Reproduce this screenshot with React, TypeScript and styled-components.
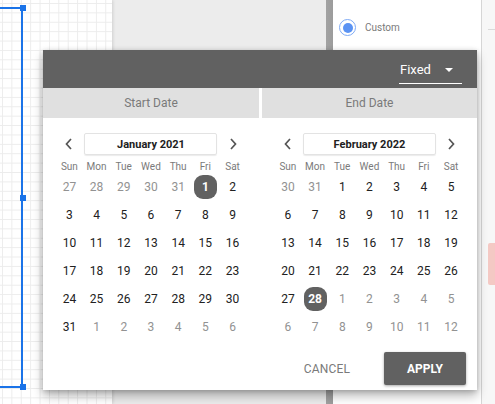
import React from "react";
import styled, { createGlobalStyle } from "styled-components";

const GlobalStyle = createGlobalStyle`
  html, body {
    margin: 0;
    padding: 0;
    overflow: hidden;
    font-family: Roboto, "Liberation Sans", sans-serif;
  }
`;

const Page = styled.div`
  position: relative;
  width: 495px;
  height: 404px;
  display: flex;
  overflow: hidden;
`;

const Canvas = styled.div`
  position: relative;
  width: 112px;
  background-color: #fff;
  background-image: linear-gradient(#ececec 1px, transparent 1px),
    linear-gradient(90deg, #ececec 1px, transparent 1px);
  background-size: 9.4px 9.4px;
  background-position: 2px 3px;
  box-shadow: 1px 0 3px rgba(0, 0, 0, 0.12);
  z-index: 1;
`;

const SelLine = styled.div<{ $dir: "v" | "h"; $top: number; $left: number; $len: number }>`
  position: absolute;
  background: #1a73e8;
  top: ${(p) => p.$top}px;
  left: ${(p) => p.$left}px;
  width: ${(p) => (p.$dir === "v" ? 2 : p.$len)}px;
  height: ${(p) => (p.$dir === "v" ? p.$len : 2)}px;
`;

const Handle = styled.div<{ $top: number }>`
  position: absolute;
  left: 20px;
  top: ${(p) => p.$top}px;
  width: 6px;
  height: 6px;
  background: #1a73e8;
`;

const Gap = styled.div`
  width: 214px;
  background: #ececec;
`;

const Divider = styled.div`
  width: 7px;
  background: linear-gradient(90deg, #a2a2a2, #9c9c9c);
`;

const SidePanel = styled.div`
  width: 149px;
  background: #fff;
  border-right: 1px solid #d6d6d6;
  padding-top: 19px;
  box-sizing: border-box;
`;

const RadioRow = styled.div`
  display: flex;
  align-items: center;
  gap: 9px;
  padding-left: 6px;
  font-size: 10px;
  color: #7a7a7a;
`;

const Radio = styled.span`
  width: 15px;
  height: 15px;
  border-radius: 50%;
  border: 1.5px solid #7eaaf5;
  display: flex;
  align-items: center;
  justify-content: center;
  &::after {
    content: "";
    width: 10px;
    height: 10px;
    border-radius: 50%;
    background: #5b93f3;
  }
`;

const RightStrip = styled.div`
  flex: 1;
  background: #f7f7f7;
  position: relative;
`;

const StripRule = styled.div<{ $top: number }>`
  margin-top: ${(p) => p.$top}px;
  margin-left: 6px;
  height: 1px;
  background: #dadada;
`;

const PinkTag = styled.div`
  position: absolute;
  top: 243px;
  left: 6px;
  right: 0;
  height: 42px;
  background: #f4c9c4;
  border-radius: 2px 0 0 2px;
`;

const Popup = styled.div`
  position: absolute;
  left: 43px;
  top: 50px;
  width: 434px;
  background: #fff;
  box-shadow: 0 6px 10px rgba(0, 0, 0, 0.28), 0 1px 5px rgba(0, 0, 0, 0.2);
  z-index: 5;
`;

const Header = styled.div`
  height: 38px;
  background: #616161;
  display: flex;
  justify-content: flex-end;
  align-items: flex-end;
  padding: 0 15px 4px 0;
  box-sizing: border-box;
`;

const Dropdown = styled.div`
  width: 63px;
  height: 28px;
  box-sizing: border-box;
  border-bottom: 1px solid #fff;
  display: flex;
  align-items: center;
  justify-content: space-between;
  padding: 0 9px 0 1px;
  color: #fff;
  font-size: 13px;
  &::after {
    content: "";
    border-left: 4px solid transparent;
    border-right: 4px solid transparent;
    border-top: 4px solid #fff;
  }
`;

const Tabs = styled.div`
  display: grid;
  grid-template-columns: 216px 215px;
  column-gap: 3px;
  height: 30px;
`;

const Tab = styled.div`
  background: #e0e0e0;
  color: #7a7a7a;
  font-size: 12px;
  display: flex;
  align-items: center;
  justify-content: center;
`;

const Body = styled.div`
  display: grid;
  grid-template-columns: 216px 215px;
  column-gap: 3px;
`;

const CalWrap = styled.div`
  display: flex;
  justify-content: center;
  padding-top: 15px;
`;

const Cal = styled.div`
  width: 190.4px;
`;

const Nav = styled.div`
  display: grid;
  grid-template-columns: 27.2px 1fr 27.2px;
  height: 22px;
  align-items: center;
`;

const Chevron = styled.svg`
  justify-self: center;
`;

const MonthBox = styled.div`
  justify-self: center;
  width: 133px;
  height: 22px;
  box-sizing: border-box;
  border: 1px solid #e3e3e3;
  box-shadow: 0 1px 1px rgba(0, 0, 0, 0.08);
  border-radius: 2px;
  display: flex;
  align-items: center;
  justify-content: center;
  font-size: 11px;
  font-weight: 700;
  color: #212121;
`;

const Grid = styled.div`
  display: grid;
  grid-template-columns: repeat(7, 27.2px);
  grid-template-rows: 14px;
  grid-auto-rows: 28px;
  margin-top: 4px;
`;

const DayHead = styled.div`
  display: flex;
  align-items: center;
  justify-content: center;
  font-size: 10px;
  color: #7a7a7a;
`;

const Day = styled.div<{ $muted?: boolean; $sel?: boolean }>`
  display: flex;
  align-items: center;
  justify-content: center;
  font-size: 12px;
  color: ${(p) => (p.$sel ? "#fff" : p.$muted ? "#929292" : "#212121")};
  font-weight: ${(p) => (p.$sel ? 700 : 400)};
  span {
    width: 23px;
    height: 24px;
    border-radius: 9px;
    display: flex;
    align-items: center;
    justify-content: center;
    background: ${(p) => (p.$sel ? "#616161" : "transparent")};
  }
`;

const Footer = styled.div`
  display: flex;
  justify-content: flex-end;
  align-items: center;
  padding: 11px 11px 5px 0;
  gap: 18px;
`;

const TextButton = styled.button`
  width: 78px;
  height: 33px;
  border: none;
  background: transparent;
  font-family: inherit;
  font-size: 12px;
  color: #7a7a7a;
  letter-spacing: 0.2px;
  padding: 0;
`;

const Primary = styled.button`
  width: 82px;
  height: 33px;
  border: none;
  border-radius: 2px;
  background: #616161;
  color: #fff;
  font-family: inherit;
  font-weight: 700;
  font-size: 12px;
  box-shadow: 0 1px 3px rgba(0, 0, 0, 0.35);
  padding: 0;
`;

const WEEK = ["Sun", "Mon", "Tue", "Wed", "Thu", "Fri", "Sat"];

type Cell = { n: number; muted: boolean };

function buildMonth(prevDays: number, firstDow: number, len: number): Cell[] {
  const cells: Cell[] = [];
  for (let i = firstDow - 1; i >= 0; i--) cells.push({ n: prevDays - i, muted: true });
  for (let d = 1; d <= len; d++) cells.push({ n: d, muted: false });
  let next = 1;
  while (cells.length < 42) cells.push({ n: next++, muted: true });
  return cells;
}

const ChevronIcon = ({ dir }: { dir: "l" | "r" }) => (
  <Chevron width="10" height="14" viewBox="0 0 10 14">
    <polyline
      points={dir === "l" ? "7,2 2.5,7 7,12" : "3,2 7.5,7 3,12"}
      fill="none"
      stroke="#555"
      strokeWidth="1.7"
    />
  </Chevron>
);

const Calendar = ({ label, cells, selected }: { label: string; cells: Cell[]; selected: number }) => (
  <CalWrap>
    <Cal>
      <Nav>
        <ChevronIcon dir="l" />
        <MonthBox>{label}</MonthBox>
        <ChevronIcon dir="r" />
      </Nav>
      <Grid>
        {WEEK.map((w) => (
          <DayHead key={w}>{w}</DayHead>
        ))}
        {cells.map((c, i) => {
          const sel = !c.muted && c.n === selected;
          return (
            <Day key={i} $muted={c.muted} $sel={sel}>
              <span>{c.n}</span>
            </Day>
          );
        })}
      </Grid>
    </Cal>
  </CalWrap>
);

const App = () => {
  const jan = buildMonth(31, 5, 31);
  const feb = buildMonth(31, 2, 28);
  return (
    <Page>
      <GlobalStyle />
      <Canvas>
        <SelLine $dir="h" $top={7} $left={0} $len={21} />
        <SelLine $dir="v" $top={8} $left={21} $len={378} />
        <SelLine $dir="h" $top={386} $left={0} $len={21} />
        <Handle $top={5} />
        <Handle $top={195} />
        <Handle $top={384} />
      </Canvas>
      <Gap />
      <Divider />
      <SidePanel>
        <RadioRow>
          <Radio />
          Custom
        </RadioRow>
      </SidePanel>
      <RightStrip>
        <StripRule $top={29} />
        <PinkTag />
      </RightStrip>

      <Popup>
        <Header>
          <Dropdown>Fixed</Dropdown>
        </Header>
        <Tabs>
          <Tab>Start Date</Tab>
          <Tab>End Date</Tab>
        </Tabs>
        <Body>
          <Calendar label="January 2021" cells={jan} selected={1} />
          <Calendar label="February 2022" cells={feb} selected={28} />
        </Body>
        <Footer>
          <TextButton>CANCEL</TextButton>
          <Primary>APPLY</Primary>
        </Footer>
      </Popup>
    </Page>
  );
};

export default App;
